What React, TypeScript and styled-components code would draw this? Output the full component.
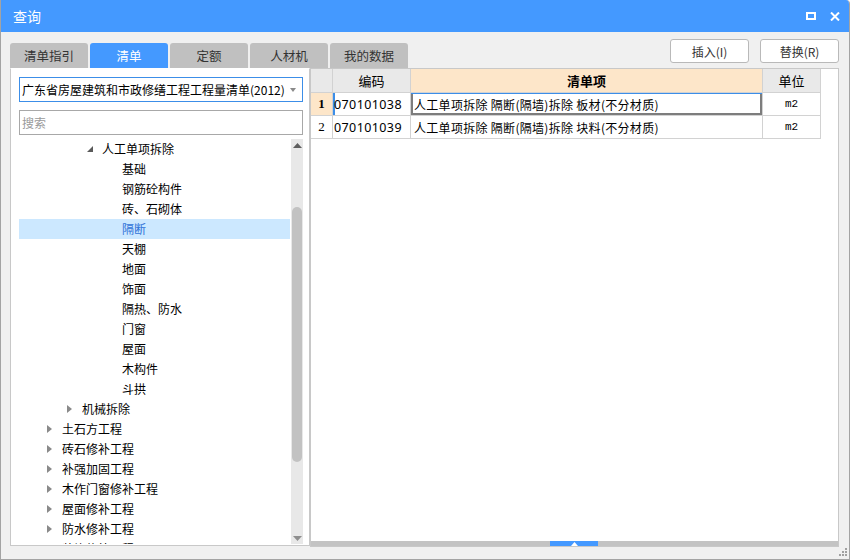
import React from "react";
import styled, { createGlobalStyle } from "styled-components";

const GlobalStyle = createGlobalStyle`
  html, body { margin: 0; padding: 0; background: #ffffff; }
  body { font-family: "Noto Sans CJK SC", "Noto Sans", sans-serif; }
  * { box-sizing: border-box; }
`;

const BLUE = "#4499ff";
const CJK = `"Noto Sans CJK SC", "Noto Sans", sans-serif`;

const Window = styled.div`
  width: 850px;
  height: 560px;
  display: flex;
  flex-direction: column;
  background: #f0f0f0;
  border: 1px solid #a3a3a3;
  border-top: none;
  border-top-right-radius: 4px;
  overflow: hidden;
  font-family: ${CJK};
`;

const TitleBar = styled.div`
  height: 32px;
  flex: none;
  background: ${BLUE};
  display: flex;
  align-items: center;
  padding: 0 8px 0 12px;
  color: #fff;
`;

const Title = styled.div`
  font-size: 14px;
  flex: 1;
  line-height: 32px;
`;

const TitleIcons = styled.div`
  display: flex;
  align-items: center;
  gap: 12px;
`;

const IconBtn = styled.div`
  width: 12px;
  height: 12px;
  display: flex;
  align-items: center;
  justify-content: center;
`;

const TopRow = styled.div`
  height: 36px;
  flex: none;
  display: flex;
  padding: 0 10px 0 9px;
`;

const Tabs = styled.div`
  display: flex;
  gap: 2px;
  align-self: flex-end;
`;

const Tab = styled.div<{ $active?: boolean }>`
  width: 78px;
  height: 25px;
  border-radius: 3px 3px 0 0;
  background: ${(p) => (p.$active ? BLUE : "#c0c0c0")};
  color: ${(p) => (p.$active ? "#fff" : "#333")};
  font-size: 12.5px;
  display: flex;
  align-items: center;
  justify-content: center;
  padding-bottom: 1px;
`;

const Spacer = styled.div`
  flex: 1;
`;

const Buttons = styled.div`
  display: flex;
  gap: 11px;
  margin-top: 7px;
`;

const Button = styled.div`
  width: 79px;
  height: 24px;
  background: #fff;
  border: 1px solid #b9b9b9;
  border-radius: 3px;
  font-size: 12px;
  color: #333;
  display: flex;
  align-items: center;
  justify-content: center;
`;

const Main = styled.div`
  height: 479px;
  flex: none;
  display: flex;
  align-items: flex-start;
  padding: 0 10px 0 9px;
`;

const LeftPanel = styled.div`
  width: 300px;
  height: 478px;
  background: #fff;
  border: 1px solid #c8c8c8;
  border-top-color: #ffffff;
  padding: 8px 6px 0 8px;
  display: flex;
  flex-direction: column;
`;

const Select = styled.div`
  height: 25px;
  flex: none;
  border: 1px solid #3c8ee8;
  display: flex;
  align-items: center;
  padding: 0 6px 0 2px;
  font-size: 12px;
  color: #000;
  white-space: nowrap;
`;

const SelectText = styled.span`
  flex: 1;
`;

const Search = styled.div`
  height: 25px;
  flex: none;
  margin-top: 8px;
  border: 1px solid #a8a8a8;
  display: flex;
  align-items: center;
  padding-left: 2px;
  font-size: 12px;
  color: #9a9a9a;
`;

const TreeBox = styled.div`
  flex: 1;
  margin-top: 4px;
  margin-bottom: 1px;
  display: flex;
  min-height: 0;
`;

const TreeList = styled.div`
  flex: 1;
  overflow: hidden;
  padding-right: 1px;
`;

const TreeRow = styled.div<{ $level: number; $selected?: boolean }>`
  height: 20px;
  display: flex;
  align-items: center;
  padding-left: ${(p) => 28 + p.$level * 20}px;
  padding-bottom: 1px;
  background: ${(p) => (p.$selected ? "#cce8ff" : "transparent")};
  color: ${(p) => (p.$selected ? "#2f72d8" : "#000")};
  font-size: 12px;
  white-space: nowrap;
`;

const ArrowSlot = styled.span`
  width: 15px;
  flex: none;
  display: flex;
  align-items: center;
`;

const VScroll = styled.div`
  width: 12px;
  flex: none;
  background: #e8e8e8;
  display: flex;
  flex-direction: column;
  align-items: center;
`;

const ScrollArrow = styled.div`
  height: 12px;
  flex: none;
  display: flex;
  align-items: center;
  justify-content: center;
  width: 100%;
`;

const Thumb = styled.div`
  width: 10px;
  height: 255px;
  margin-top: 56px;
  border-radius: 5px;
  background: #c2c2c2;
`;

const RightPanel = styled.div`
  flex: 1;
  height: 479px;
  background: #fff;
  border: 1px solid #c8c8c8;
  display: flex;
  flex-direction: column;
`;

const GridArea = styled.div`
  flex: 1;
`;

const Row = styled.div<{ $header?: boolean }>`
  display: grid;
  grid-template-columns: 22px 78px 352px 58px;
  height: ${(p) => (p.$header ? 24 : 23)}px;
  width: 510px;
`;

const Cell = styled.div<{
  $bg?: string;
  $align?: "left" | "center";
  $bold?: boolean;
  $font?: string;
  $size?: number;
}>`
  border-right: 1px solid #d2d2d2;
  border-bottom: 1px solid #d2d2d2;
  background: ${(p) => p.$bg || "#fff"};
  display: flex;
  align-items: center;
  justify-content: ${(p) => (p.$align === "left" ? "flex-start" : "center")};
  padding-left: ${(p) => (p.$align === "left" ? "2px" : "0")};
  font-weight: ${(p) => (p.$bold ? 700 : 400)};
  font-family: ${(p) => p.$font || CJK};
  font-size: ${(p) => p.$size || 12}px;
  color: #000;
  white-space: nowrap;
  overflow: hidden;
`;

const CodeCell = styled(Cell)<{ $current?: boolean }>`
  box-shadow: ${(p) => (p.$current ? "inset 2px 0 0 #3c8ee8" : "none")};
  font-family: "Noto Sans", sans-serif;
  font-size: 12.5px;
  letter-spacing: 0.4px;
  padding-left: 1px;
`;

const ItemCell = styled(Cell)<{ $focus?: boolean }>`
  padding-left: 3px;
  letter-spacing: 0.3px;
  box-shadow: ${(p) =>
    p.$focus
      ? "inset 0 1px 0 #3c8ee8, inset 2px 0 0 #7d7d7d, inset -2px 0 0 #7d7d7d, inset 0 -2px 0 #7d7d7d"
      : "none"};
`;

const HBar = styled.div`
  height: 5px;
  flex: none;
  background: #c3c3c3;
  display: flex;
`;

const HHandle = styled.div`
  width: 48px;
  margin-left: 239px;
  background: ${BLUE};
  display: flex;
  align-items: center;
  justify-content: center;
`;

const Bottom = styled.div`
  flex: 1;
  display: flex;
  justify-content: flex-end;
  align-items: flex-end;
  padding: 0 1px 2px 0;
`;

type Node = { label: string; level: number; arrow?: "open" | "closed"; selected?: boolean };

const tree: Node[] = [
  { label: "人工单项拆除", level: 2, arrow: "open" },
  { label: "基础", level: 3 },
  { label: "钢筋砼构件", level: 3 },
  { label: "砖、石砌体", level: 3 },
  { label: "隔断", level: 3, selected: true },
  { label: "天棚", level: 3 },
  { label: "地面", level: 3 },
  { label: "饰面", level: 3 },
  { label: "隔热、防水", level: 3 },
  { label: "门窗", level: 3 },
  { label: "屋面", level: 3 },
  { label: "木构件", level: 3 },
  { label: "斗拱", level: 3 },
  { label: "机械拆除", level: 1, arrow: "closed" },
  { label: "土石方工程", level: 0, arrow: "closed" },
  { label: "砖石修补工程", level: 0, arrow: "closed" },
  { label: "补强加固工程", level: 0, arrow: "closed" },
  { label: "木作门窗修补工程", level: 0, arrow: "closed" },
  { label: "屋面修补工程", level: 0, arrow: "closed" },
  { label: "防水修补工程", level: 0, arrow: "closed" },
  { label: "装饰修补工程", level: 0, arrow: "closed" },
];

const rows = [
  { n: "1", code: "070101038", item: "人工单项拆除 隔断(隔墙)拆除 板材(不分材质)", unit: "m2", current: true },
  { n: "2", code: "070101039", item: "人工单项拆除 隔断(隔墙)拆除 块料(不分材质)", unit: "m2", current: false },
];

const ClosedArrow = () => (
  <svg width="5" height="8" viewBox="0 0 5 8">
    <polygon points="0,0 5,4 0,8" fill="#8a8a8a" />
  </svg>
);

const OpenArrow = () => (
  <svg width="6" height="6" viewBox="0 0 6 6" style={{ marginTop: 1 }}>
    <polygon points="6,0 6,6 0,6" fill="#5a5a5a" />
  </svg>
);

export default function App() {
  return (
    <>
      <GlobalStyle />
      <Window>
        <TitleBar>
          <Title>查询</Title>
          <TitleIcons>
            <IconBtn>
              <svg width="10" height="8" viewBox="0 0 10 8">
                <rect x="1" y="1" width="8" height="6" fill="none" stroke="#fff" strokeWidth="2" />
              </svg>
            </IconBtn>
            <IconBtn>
              <svg width="10" height="9" viewBox="0 0 10 9">
                <path d="M1 0.5 L9 8.5 M9 0.5 L1 8.5" stroke="#fff" strokeWidth="2" />
              </svg>
            </IconBtn>
          </TitleIcons>
        </TitleBar>

        <TopRow>
          <Tabs>
            <Tab>清单指引</Tab>
            <Tab $active>清单</Tab>
            <Tab>定额</Tab>
            <Tab>人材机</Tab>
            <Tab>我的数据</Tab>
          </Tabs>
          <Spacer />
          <Buttons>
            <Button>插入(I)</Button>
            <Button>替换(R)</Button>
          </Buttons>
        </TopRow>

        <Main>
          <LeftPanel>
            <Select>
              <SelectText>广东省房屋建筑和市政修缮工程工程量清单(2012)</SelectText>
              <svg width="6" height="4" viewBox="0 0 6 4">
                <polygon points="0,0 6,0 3,4" fill="#8a8a8a" />
              </svg>
            </Select>
            <Search>搜索</Search>
            <TreeBox>
              <TreeList>
                {tree.map((n, i) => (
                  <TreeRow key={i} $level={n.level} $selected={n.selected}>
                    <ArrowSlot>
                      {n.arrow === "closed" && <ClosedArrow />}
                      {n.arrow === "open" && <OpenArrow />}
                    </ArrowSlot>
                    {n.label}
                  </TreeRow>
                ))}
              </TreeList>
              <VScroll>
                <ScrollArrow>
                  <svg width="9" height="5" viewBox="0 0 9 5">
                    <polygon points="0,5 4.5,0 9,5" fill="#5e5e5e" />
                  </svg>
                </ScrollArrow>
                <Thumb />
                <Spacer />
                <ScrollArrow>
                  <svg width="9" height="5" viewBox="0 0 9 5">
                    <polygon points="0,0 9,0 4.5,5" fill="#8e8e8e" />
                  </svg>
                </ScrollArrow>
              </VScroll>
            </TreeBox>
          </LeftPanel>

          <RightPanel>
            <GridArea>
              <Row $header>
                <Cell $bg="#e9e9e9" />
                <Cell $bg="#e9e9e9" $size={13}>编码</Cell>
                <Cell $bg="#fde6c9" $bold $size={13}>清单项</Cell>
                <Cell $bg="#e9e9e9" $size={13}>单位</Cell>
              </Row>
              {rows.map((r) => (
                <Row key={r.n}>
                  <Cell
                    $bg={r.current ? "#fde6c9" : "#fff"}
                    $bold={r.current}
                    $font={`"Liberation Serif", serif`}
                    $size={13}
                  >
                    {r.n}
                  </Cell>
                  <CodeCell $align="left" $current={r.current}>
                    {r.code}
                  </CodeCell>
                  <ItemCell $align="left" $focus={r.current}>
                    {r.item}
                  </ItemCell>
                  <Cell $font={`"Liberation Mono", monospace`} $size={11}>
                    {r.unit}
                  </Cell>
                </Row>
              ))}
            </GridArea>
            <HBar>
              <HHandle>
                <svg width="7" height="4" viewBox="0 0 7 4">
                  <polygon points="0,4 3.5,0 7,4" fill="#fff" />
                </svg>
              </HHandle>
            </HBar>
          </RightPanel>
        </Main>

        <Bottom>
          <svg width="10" height="10" viewBox="0 0 10 10">
            <rect x="7" y="1" width="2" height="2" fill="#a0a0a0" />
            <rect x="4" y="4" width="2" height="2" fill="#a0a0a0" />
            <rect x="7" y="4" width="2" height="2" fill="#a0a0a0" />
            <rect x="1" y="7" width="2" height="2" fill="#a0a0a0" />
            <rect x="4" y="7" width="2" height="2" fill="#a0a0a0" />
            <rect x="7" y="7" width="2" height="2" fill="#a0a0a0" />
          </svg>
        </Bottom>
      </Window>
    </>
  );
}
